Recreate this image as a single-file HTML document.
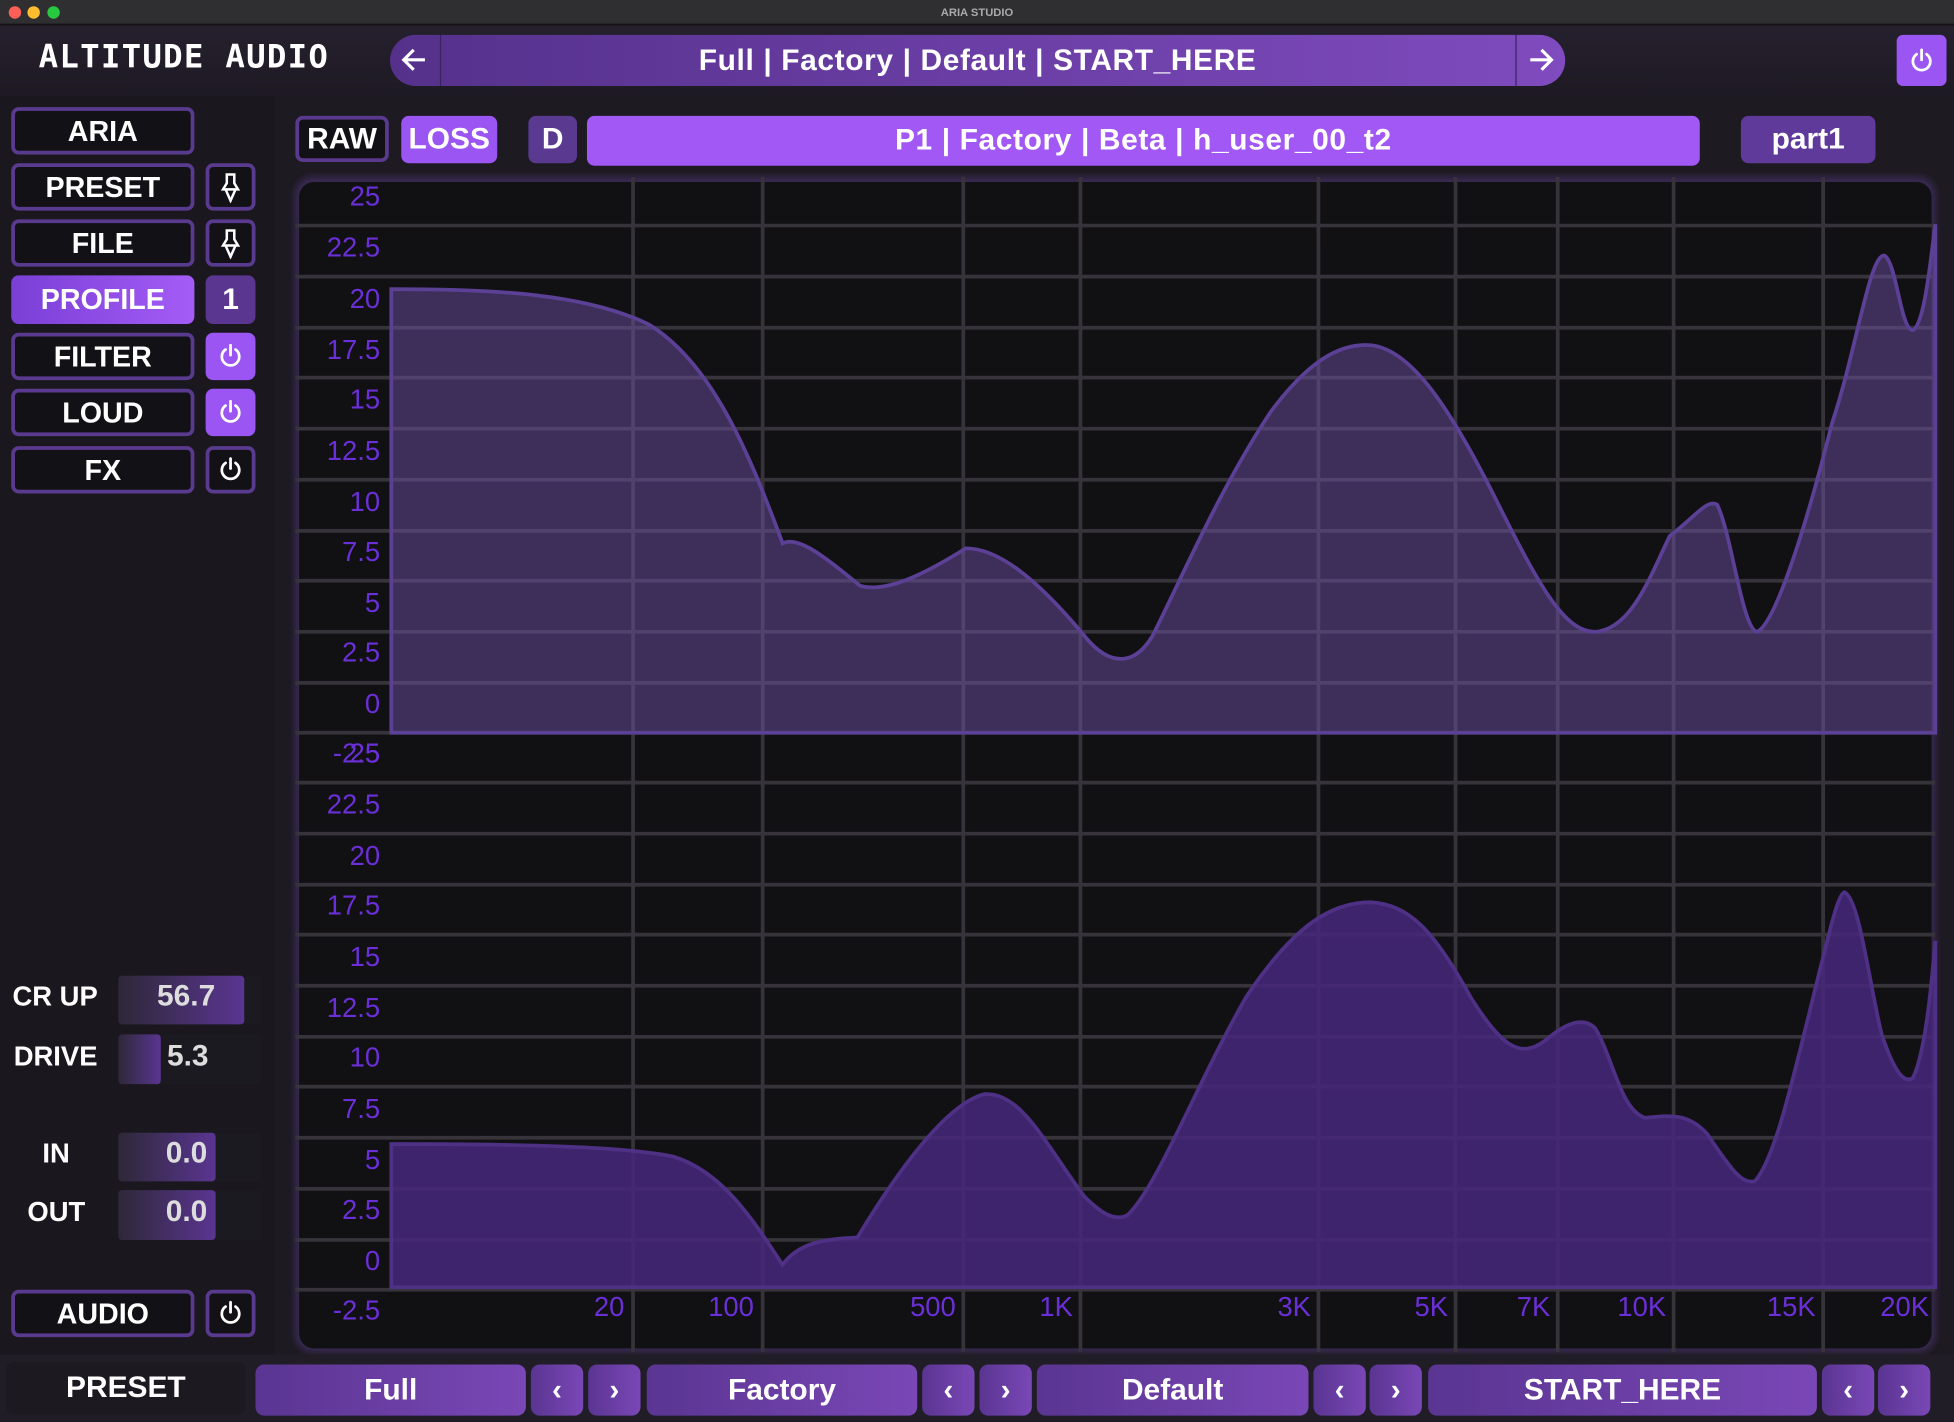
<!DOCTYPE html>
<html><head><meta charset="utf-8"><style>
*{margin:0;padding:0;box-sizing:border-box}
html,body{width:1954px;height:1422px;overflow:hidden;background:#1b1920}
#w{position:absolute;left:0;top:0;width:1568px;height:1141px;transform:scale(1.24617);transform-origin:0 0;font-family:"Liberation Sans","DejaVu Sans",sans-serif;color:#fff;background:#1d1a22}
.a{position:absolute}
.tb{left:0;top:0;width:1568px;height:20px;background:#2f2e31;border-bottom:1px solid #111;font-size:9px;color:#aaa;text-align:center;line-height:20px;font-weight:bold}
.dot{width:10px;height:10px;border-radius:50%;top:5px}
.hdr{left:0;top:21px;width:1568px;height:56px;background:linear-gradient(#25202d,#1e1a24)}
.btn{display:flex;align-items:center;justify-content:center;font-weight:bold;border-radius:6px}
.ol{border:3px solid #5a3a8e;background:#121116;font-size:23px}
.pw{border:3px solid #5a3a8e;background:#121116}
.on{background:#9a55f2}
.bb{background:linear-gradient(90deg,#5a3592,#7a47b6);border-radius:7px;font-size:24px}
.sl{background:#1c1a21;border-radius:3px}
.lbl{font-weight:bold;font-size:22px}
.val{font-size:24px;color:#ddd;font-weight:bold}
</style></head><body><div id="w">
<div class="a tb">ARIA STUDIO</div>
<div class="a dot" style="left:7px;background:#fe5f57"></div>
<div class="a dot" style="left:22px;background:#febc2e"></div>
<div class="a dot" style="left:38px;background:#28c840"></div>
<div class="a hdr"></div>
<div class="a" style="left:31px;top:31px;font:bold 26px 'DejaVu Sans Mono','Liberation Mono',monospace;letter-spacing:1px">ALTITUDE AUDIO</div>
<div class="a" style="left:313px;top:28px;width:943px;height:41px;border-radius:21px;background:linear-gradient(90deg,#55318b,#7f4bbe);overflow:hidden">
 <div class="a" style="left:40px;top:0;width:1px;height:41px;background:#3a2460"></div>
 <div class="a" style="left:903px;top:0;width:1px;height:41px;background:#3a2460"></div>
</div>
<svg class="a" style="left:320px;top:36px" width="26" height="24" viewBox="0 0 26 24"><path d="M21 12H5M12 4l-8 8 8 8" stroke="#fff" stroke-width="2.5" fill="none"/></svg>
<svg class="a" style="left:1224px;top:36px" width="26" height="24" viewBox="0 0 26 24"><path d="M4 12h16M13 4l8 8-8 8" stroke="#fff" stroke-width="2.5" fill="none"/></svg>
<div class="a" style="left:353px;top:28px;width:863px;height:41px;display:flex;align-items:center;justify-content:center;font-weight:bold;font-size:24px;letter-spacing:.5px">Full | Factory | Default | START_HERE</div>
<div class="a btn on" style="left:1522px;top:28px;width:40px;height:41px;border-radius:5px"><svg width="22" height="22" viewBox="0 0 22 22"><path d="M7 5.5A7 7 0 1 0 15 5.5M11 2v8" stroke="#fff" stroke-width="2.2" fill="none" stroke-linecap="round"/></svg></div>

<div class="a" style="left:0;top:77px;width:220px;height:1010px;background:#1a181e"></div>
<div class="a btn ol" style="left:9px;top:86px;width:147px;height:38px">ARIA</div>
<div class="a btn ol" style="left:9px;top:131px;width:147px;height:38px">PRESET</div>
<div class="a btn ol" style="left:9px;top:176px;width:147px;height:38px">FILE</div>
<div class="a btn" style="left:9px;top:221px;width:147px;height:39px;font-size:23px;background:linear-gradient(90deg,#7a3fd6,#a45cf7)">PROFILE</div>
<div class="a btn ol" style="left:9px;top:267px;width:147px;height:38px">FILTER</div>
<div class="a btn ol" style="left:9px;top:312px;width:147px;height:38px">LOUD</div>
<div class="a btn ol" style="left:9px;top:358px;width:147px;height:38px">FX</div>
<div class="a btn pw" style="left:165px;top:131px;width:40px;height:38px"><svg width="18" height="26" viewBox="0 0 18 26"><path d="M5 3h8M6 3v7L3 15h12l-3-5V3M5 15l4 9 4-9" stroke="#fff" stroke-width="2" fill="none"/></svg></div>
<div class="a btn pw" style="left:165px;top:176px;width:40px;height:38px"><svg width="18" height="26" viewBox="0 0 18 26"><path d="M5 3h8M6 3v7L3 15h12l-3-5V3M5 15l4 9 4-9" stroke="#fff" stroke-width="2" fill="none"/></svg></div>
<div class="a btn" style="left:165px;top:221px;width:40px;height:39px;background:#5a3690;font-size:24px">1</div>
<div class="a btn on" style="left:165px;top:267px;width:40px;height:38px"><svg width="22" height="22" viewBox="0 0 22 22"><path d="M7 5.5A7 7 0 1 0 15 5.5M11 2v8" stroke="#fff" stroke-width="2.2" fill="none" stroke-linecap="round"/></svg></div>
<div class="a btn on" style="left:165px;top:312px;width:40px;height:38px"><svg width="22" height="22" viewBox="0 0 22 22"><path d="M7 5.5A7 7 0 1 0 15 5.5M11 2v8" stroke="#fff" stroke-width="2.2" fill="none" stroke-linecap="round"/></svg></div>
<div class="a btn pw" style="left:165px;top:358px;width:40px;height:38px"><svg width="22" height="22" viewBox="0 0 22 22"><path d="M7 5.5A7 7 0 1 0 15 5.5M11 2v8" stroke="#fff" stroke-width="2.2" fill="none" stroke-linecap="round"/></svg></div>

<div class="a lbl" style="left:10px;top:787px">CR UP</div>
<div class="a sl" style="left:95px;top:783px;width:115px;height:39px"><div style="width:101px;height:39px;background:linear-gradient(90deg,#2e2838,#5a3592);border-radius:3px"></div></div>
<div class="a val" style="left:126px;top:786px">56.7</div>
<div class="a lbl" style="left:11px;top:835px">DRIVE</div>
<div class="a sl" style="left:95px;top:830px;width:115px;height:40px"><div style="width:34px;height:40px;background:linear-gradient(90deg,#2e2838,#5a3592);border-radius:3px"></div></div>
<div class="a val" style="left:134px;top:834px">5.3</div>
<div class="a lbl" style="left:34px;top:913px">IN</div>
<div class="a sl" style="left:95px;top:909px;width:115px;height:39px"><div style="width:78px;height:39px;background:linear-gradient(90deg,#2e2838,#5a3592);border-radius:3px"></div></div>
<div class="a val" style="left:133px;top:912px">0.0</div>
<div class="a lbl" style="left:22px;top:960px">OUT</div>
<div class="a sl" style="left:95px;top:955px;width:115px;height:40px"><div style="width:78px;height:40px;background:linear-gradient(90deg,#2e2838,#5a3592);border-radius:3px"></div></div>
<div class="a val" style="left:133px;top:959px">0.0</div>
<div class="a btn ol" style="left:9px;top:1035px;width:147px;height:38px">AUDIO</div>
<div class="a btn pw" style="left:165px;top:1035px;width:40px;height:38px"><svg width="22" height="22" viewBox="0 0 22 22"><path d="M7 5.5A7 7 0 1 0 15 5.5M11 2v8" stroke="#fff" stroke-width="2.2" fill="none" stroke-linecap="round"/></svg></div>

<div class="a btn ol" style="left:237px;top:93px;width:75px;height:37px;font-size:24px">RAW</div>
<div class="a btn on" style="left:322px;top:93px;width:77px;height:38px;font-size:24px">LOSS</div>
<div class="a btn" style="left:424px;top:93px;width:39px;height:38px;font-size:24px;background:#5a3a90">D</div>
<div class="a btn" style="left:471px;top:93px;width:893px;height:40px;font-size:24px;background:#a258f5;letter-spacing:.5px">P1 | Factory | Beta | h_user_00_t2</div>
<div class="a btn" style="left:1397px;top:93px;width:108px;height:38px;font-size:24px;background:#5f3a9a">part1</div>

<svg class="a" style="left:230px;top:138px" width="1330" height="952" viewBox="230 138 1330 952">
<defs><filter id="gl"><feGaussianBlur stdDeviation="3"/></filter></defs>
<rect x="237" y="142" width="1316" height="943" rx="14" fill="#3a2a55" filter="url(#gl)"/>
<rect x="240" y="146" width="1310" height="936" rx="12" fill="#111013"/>
<g stroke="#36343a" stroke-width="3">
<path d="M508 142V1085M612 142V1085M773 142V1085M867 142V1085M1058 142V1085M1168 142V1085M1250 142V1085M1343 142V1085M1463 142V1085"/>
<path d="M237 181H1553M237 222H1553M237 263H1553M237 303H1553M237 344H1553M237 385H1553M237 426H1553M237 466H1553M237 507H1553M237 548H1553M237 588H1553M237 628H1553M237 669H1553M237 710H1553M237 750H1553M237 791H1553M237 832H1553M237 872H1553M237 913H1553M237 954H1553M237 995H1553M237 1035H1553"/>
</g>
<path d="M314 588V232C400 232 470 236 520 260C570 290 600 360 628 436C640 430 660 445 690 470C710 476 740 462 775 440C800 440 830 462 870 510C890 535 910 535 925 510C950 460 980 390 1020 330C1050 290 1075 275 1100 277C1130 280 1160 320 1200 400C1235 470 1255 507 1280 507C1310 505 1325 460 1340 430C1360 415 1370 400 1378 405C1390 430 1398 505 1410 507C1425 500 1450 420 1470 340C1490 280 1500 205 1512 205C1522 210 1525 265 1535 265C1545 260 1550 200 1553 180V588Z" fill="rgba(105,78,160,0.5)" stroke="#5b4095" stroke-width="3"/>
<path d="M314 1033V918C420 918 500 920 540 928C580 940 605 980 628 1015C640 998 660 994 688 993C720 940 760 885 790 878C820 876 840 920 870 960C885 975 895 980 905 975C930 950 960 870 1000 800C1040 740 1070 724 1100 724C1130 726 1150 745 1180 800C1205 840 1220 850 1240 835C1255 822 1270 815 1280 825C1295 850 1300 890 1320 897C1340 895 1355 893 1370 910C1390 940 1398 950 1408 948C1425 930 1440 860 1460 780C1470 740 1475 718 1480 716C1492 720 1500 790 1510 830C1520 860 1528 870 1535 865C1545 845 1550 790 1553 755V1033Z" fill="rgba(70,40,125,0.85)" stroke="#4e3085" stroke-width="3"/>
<g fill="#6a2fd6" font-family="Liberation Sans,sans-serif" font-size="22" text-anchor="end">
<text x="305" y="165">25</text><text x="305" y="206">22.5</text><text x="305" y="247">20</text><text x="305" y="288">17.5</text><text x="305" y="328">15</text><text x="305" y="369">12.5</text><text x="305" y="410">10</text><text x="305" y="450">7.5</text><text x="305" y="491">5</text><text x="305" y="531">2.5</text><text x="305" y="572">0</text>
<text x="305" y="612">-2.5</text><text x="305" y="612">25</text><text x="305" y="653">22.5</text><text x="305" y="694">20</text><text x="305" y="734">17.5</text><text x="305" y="775">15</text><text x="305" y="816">12.5</text><text x="305" y="856">10</text><text x="305" y="897">7.5</text><text x="305" y="938">5</text><text x="305" y="978">2.5</text><text x="305" y="1019">0</text><text x="305" y="1059">-2.5</text>
<text x="501" y="1056">20</text><text x="605" y="1056">100</text><text x="767" y="1056">500</text><text x="861" y="1056">1K</text><text x="1052" y="1056">3K</text><text x="1162" y="1056">5K</text><text x="1244" y="1056">7K</text><text x="1337" y="1056">10K</text><text x="1457" y="1056">15K</text><text x="1548" y="1056">20K</text>
</g>
</svg>

<div class="a" style="left:0;top:1087px;width:1568px;height:54px;background:#201d26"></div>
<div class="a btn" style="left:5px;top:1093px;width:192px;height:42px;font-size:24px;background:#1c1a20">PRESET</div>
<div class="a btn bb" style="left:205px;top:1095px;width:217px;height:41px">Full</div>
<div class="a btn bb" style="left:426px;top:1095px;width:42px;height:41px">‹</div>
<div class="a btn bb" style="left:472px;top:1095px;width:42px;height:41px">›</div>
<div class="a btn bb" style="left:519px;top:1095px;width:217px;height:41px">Factory</div>
<div class="a btn bb" style="left:740px;top:1095px;width:42px;height:41px">‹</div>
<div class="a btn bb" style="left:786px;top:1095px;width:42px;height:41px">›</div>
<div class="a btn bb" style="left:832px;top:1095px;width:218px;height:41px">Default</div>
<div class="a btn bb" style="left:1054px;top:1095px;width:42px;height:41px">‹</div>
<div class="a btn bb" style="left:1099px;top:1095px;width:42px;height:41px">›</div>
<div class="a btn bb" style="left:1146px;top:1095px;width:312px;height:41px">START_HERE</div>
<div class="a btn bb" style="left:1462px;top:1095px;width:42px;height:41px">‹</div>
<div class="a btn bb" style="left:1507px;top:1095px;width:42px;height:41px">›</div>
</div></body></html>
